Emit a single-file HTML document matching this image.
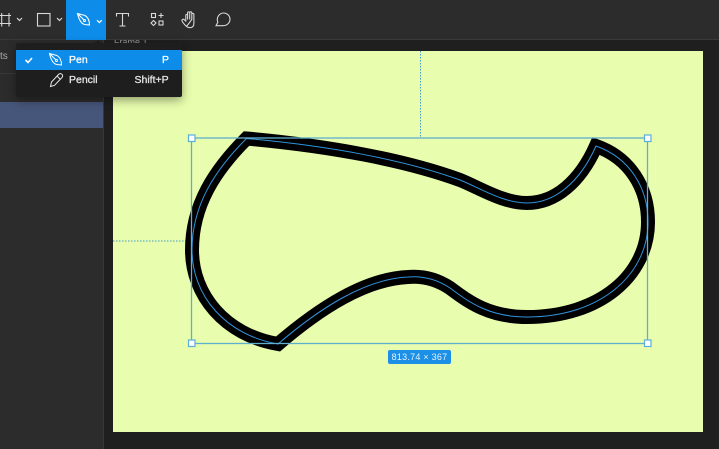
<!DOCTYPE html>
<html>
<head>
<meta charset="utf-8">
<style>
html,body{margin:0;padding:0;background:#1f1f1f;}
#p{position:relative;width:719px;height:449px;overflow:hidden;background:#1f1f1f;font-family:"Liberation Sans",sans-serif;filter:blur(.35px);}
#p div{position:absolute;}
svg{position:absolute;left:0;top:0;}
.m{font-size:10.5px;line-height:13px;font-weight:normal;-webkit-text-stroke:.3px currentColor;}
</style>
</head>
<body>
<div id="p">
<div style="left:0;top:40px;width:103px;height:409px;background:#2c2c2c;"></div>
<div style="left:103px;top:40px;width:1px;height:409px;background:#383838;"></div>
<div style="left:0;top:73px;width:103px;height:1px;background:#383838;"></div>
<div style="left:0;top:102px;width:103px;height:26px;background:#46557a;"></div>
<div style="left:0;top:51px;font-size:10px;line-height:12px;color:#aaa;">ts</div>
<div style="left:114px;top:37px;font-size:9px;line-height:11px;color:#999;">Frame 1</div>
<div style="left:113px;top:51px;width:590px;height:381px;background:#e8fdae;"></div>
<div style="left:0;top:0;width:719px;height:39px;background:#2c2c2c;border-bottom:1px solid #3a3a3a;"></div>
<div style="left:66px;top:0;width:40px;height:40px;background:#0d8ce9;"></div>

<svg width="719" height="449" viewBox="0 0 719 449">
<path d="M420.5 51V138M113 241H191" stroke="#3f9fc8" stroke-width="1" stroke-dasharray="1.5 1.5" fill="none"/>
<path d="M246.5 138.5C330 146 405 160 460 180C480 188 503 203 527 203C555 203 580 182 596 146C630 158 648 188 648 222C648 275 600 317 527 317C490 317 470 303 450 288C435 278 420 276 408 277C365 279 320 308 278 344C225 335 192 295 192 250C192 205 215 170 246.5 138.5Z" fill="none" stroke="#000" stroke-width="14" stroke-linejoin="miter" stroke-miterlimit="4"/>
<path d="M246.5 138.5C330 146 405 160 460 180C480 188 503 203 527 203C555 203 580 182 596 146C630 158 648 188 648 222C648 275 600 317 527 317C490 317 470 303 450 288C435 278 420 276 408 277C365 279 320 308 278 344C225 335 192 295 192 250C192 205 215 170 246.5 138.5Z" fill="none" stroke="#2f94dc" stroke-width="1"/>
<rect x="191.5" y="138" width="456" height="205.5" fill="none" stroke="#5fb0cf" stroke-width="1.3"/>
<g fill="#fff" stroke="#5aaedb" stroke-width="1.2">
<rect x="188.5" y="135" width="6.5" height="6.5"/>
<rect x="644.5" y="135" width="6.5" height="6.5"/>
<rect x="188.5" y="340" width="6.5" height="6.5"/>
<rect x="644.5" y="340" width="6.5" height="6.5"/>
</g>

<g fill="none" stroke="#d8d8d8" stroke-width="1.1">
<!-- frame -->
<path d="M1.7 13V26.5M9 13V26.5M-1 15.5H11M-1 23.5H11"/>
<path d="M17 18L19.5 20.5L22 18" stroke-width="1.2"/>
<!-- rectangle -->
<rect x="37.5" y="13.5" width="12.5" height="12.5"/>
<path d="M57 18L59.5 20.5L62 18" stroke-width="1.2"/>
<!-- pen -->
<g stroke="#fff">
<path d="M77.5 13.5L85 15.5C87.5 17 89.5 20 89.5 25L84.5 24.5C81 23.5 79 20 77.5 13.5Z"/>
<path d="M77.5 13.5L84 20"/>
<circle cx="84.5" cy="20.5" r="1"/>
<path d="M97 20.2L99.4 22.6L101.8 20.2" stroke-width="1.2"/>
</g>
<!-- T -->
<path d="M116.5 16.5V13.5H128.5V16.5M122.5 13.5V26M119.5 26H125.5"/>
<!-- components -->
<rect x="151.5" y="13.5" width="4" height="4"/>
<path d="M161 13V18M158.5 15.5H163.5"/>
<path d="M153.5 20.5L156 23L153.5 25.5L151 23Z"/>
<rect x="159" y="21" width="4" height="4"/>
<!-- hand -->
<path d="M186.5 26.5C185 25 182.2 22 182 20.8C181.7 19.4 183.2 18.7 184.3 19.8L185.8 21V15.5C185.8 14 187.6 14 187.6 15.5V19.5M187.6 19.5V13C187.6 11.5 189.7 11.5 189.7 13V19.5M189.7 19.5V12.8C189.7 11.5 191.8 11.5 191.8 12.8V19.5M191.8 19.5V14.5C191.8 13 193.9 13 193.9 14.5V23C193.9 26 192.5 27.7 190 27.7C188.5 27.7 187.5 27.3 186.5 26.5Z"/>
<!-- comment -->
<path d="M216 25.7L217.8 22.3C216 17.5 219.5 13 223.5 13C227.3 13 230 16 230 19.3C230 23 226.8 25.7 223 25.7Z"/>
</g>
</svg>

<div style="left:16px;top:43px;width:166px;height:54px;background:#1e1e1e;border-radius:2px;box-shadow:0 3px 10px rgba(0,0,0,.4);"></div>
<div style="left:16px;top:50px;width:166px;height:20px;background:#0d8ce9;"></div>
<div class="m" style="left:69px;top:54px;color:#fff;">Pen</div>
<div class="m" style="left:162px;top:54px;color:#fff;">P</div>
<div class="m" style="left:69px;top:74px;color:#e6e6e6;">Pencil</div>
<div class="m" style="left:134.5px;top:74px;color:#e6e6e6;">Shift+P</div>
<svg width="719" height="449" viewBox="0 0 719 449" style="pointer-events:none">
<path d="M94 43L98 40L102 43Z" fill="#1e1e1e"/>
<path d="M25.5 60L28 62.5L32 58" fill="none" stroke="#fff" stroke-width="1.6"/>
<g fill="none" stroke="#fff" stroke-width="1">
<path d="M49.5 53.5L57 55.5C59.5 57 61.5 60 61.5 65L56.5 64.5C53 63.5 51 60 49.5 53.5Z"/>
<path d="M49.5 53.5L56 60"/>
<circle cx="56.5" cy="60.5" r="1"/>
</g>
<g fill="none" stroke="#e6e6e6" stroke-width="1">
<path d="M50.5 86.5L51.5 82L58.5 74.5C59.5 73.3 61 73.3 62 74.3C62.8 75.3 62.8 76.5 62 77.5L54.5 85.3Z"/>
<path d="M57 76L60.5 79.5"/>
</g>
</svg>
<div style="left:388px;top:350px;width:63px;height:14px;background:#1c8fe6;border-radius:2px;color:#e6f4ff;font-size:9px;line-height:14px;text-align:center;letter-spacing:.25px;">813.74 × 367</div>
</div>
</body>
</html>
